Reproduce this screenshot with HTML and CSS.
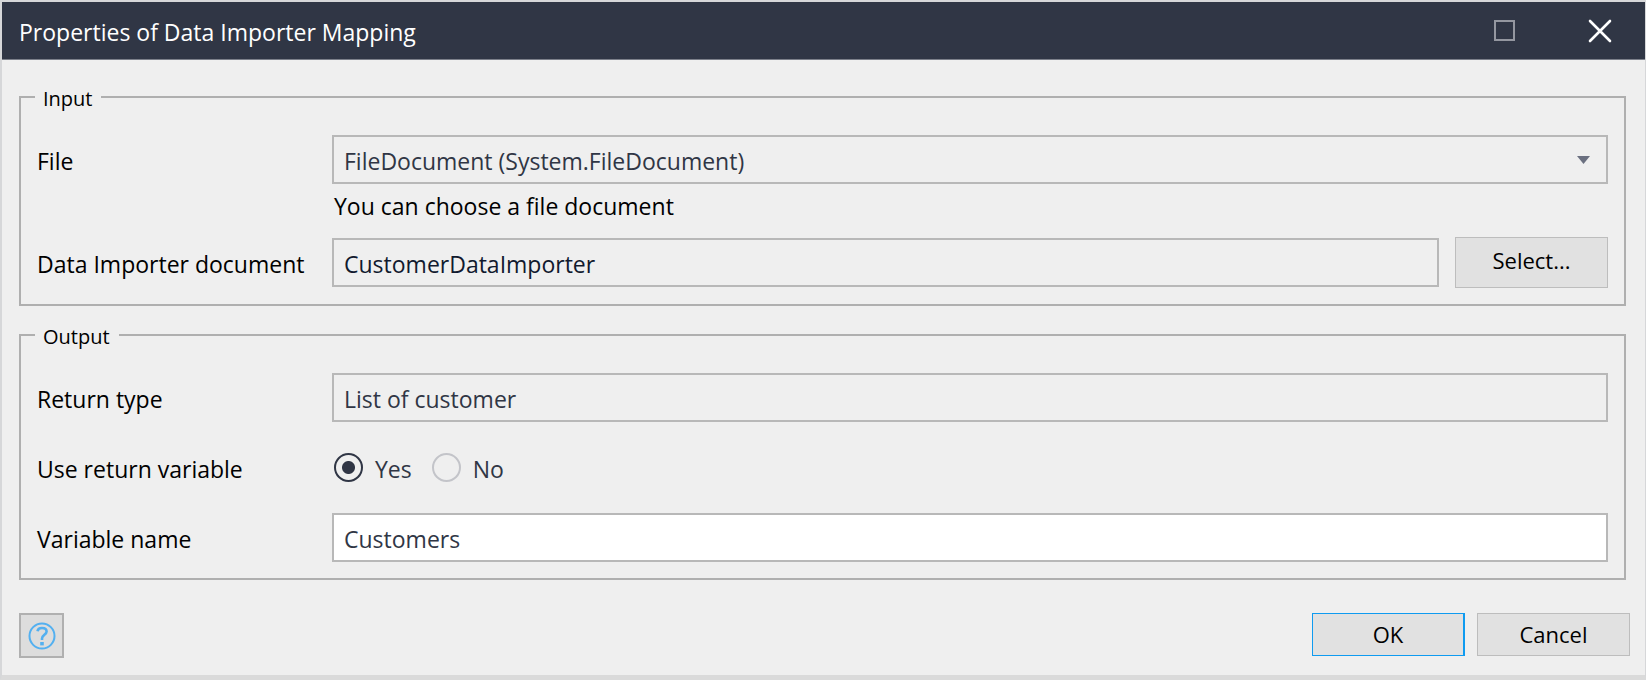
FILE: index.html
```html
<!DOCTYPE html>
<html lang="en">
<head>
<meta charset="utf-8">
<title>Properties of Data Importer Mapping</title>
<link rel="stylesheet" href="styles.css">
</head>
<body>
<main class="dialog">
  <header class="titlebar">
    <h1 class="title">Properties of Data Importer Mapping</h1>
    <div class="window-actions">
      <button class="window-button" type="button" aria-label="Maximize">
        <svg width="22" height="22" viewBox="0 0 22 22"><rect x="1" y="1" width="19" height="19" fill="none" stroke="#9497a0" stroke-width="2"/></svg>
      </button>
      <button class="window-button" type="button" aria-label="Close">
        <svg width="24" height="24" viewBox="0 0 24 24"><path d="M2 2 22 22M22 2 2 22" fill="none" stroke="#fff" stroke-width="2.6" stroke-linecap="round"/></svg>
      </button>
    </div>
  </header>
  <form class="content">
    <fieldset class="group group-input">
      <legend class="legend">Input</legend>
      <div class="row">
        <label class="label" for="file">File</label>
        <div class="select-wrap">
          <select class="field" id="file"><option>FileDocument (System.FileDocument)</option></select>
          <svg class="arrow" width="13" height="8" viewBox="0 0 13 8"><path d="M0 0H13L6.500 8Z" fill="#6b7080"/></svg>
        </div>
      </div>
      <div class="row hint-row">
        <p class="hint">You can choose a file document</p>
      </div>
      <div class="row">
        <label class="label" for="document">Data Importer document</label>
        <div class="picker">
          <input class="field field-dark" id="document" type="text" value="CustomerDataImporter" readonly>
          <button class="button button-tall" type="button">Select...</button>
        </div>
      </div>
    </fieldset>
    <fieldset class="group group-output">
      <legend class="legend">Output</legend>
      <div class="row">
        <label class="label" for="type">Return type</label>
        <input class="field" id="type" type="text" value="List of customer" readonly>
      </div>
      <div class="row">
        <span class="label" id="use-label">Use return variable</span>
        <div class="radios" role="radiogroup" aria-labelledby="use-label">
          <label class="choice"><input class="radio" type="radio" name="use" checked><span class="choice-text">Yes</span></label>
          <label class="choice"><input class="radio" type="radio" name="use"><span class="choice-text">No</span></label>
        </div>
      </div>
      <div class="row">
        <label class="label" for="name">Variable name</label>
        <input class="field field-editable" id="name" type="text" value="Customers">
      </div>
    </fieldset>
    <footer class="footer">
      <button class="help" type="button" aria-label="Help">
        <svg width="28" height="28" viewBox="0 0 28 28" fill="none" stroke="#53b0f0"><circle cx="14" cy="14" r="12.500" stroke-width="2"/><path d="M9.500 9.200C9.800 7 11.500 6 14 6C16.700 6 18.600 7.300 18.600 9.600C18.600 12.600 14 13 14 16.400V18" stroke-width="2.600"/><path d="M14 20V23.400" stroke-width="3.600"/></svg>
      </button>
      <div class="actions">
        <button class="button button-primary" type="submit">OK</button>
        <button class="button" type="button">Cancel</button>
      </div>
    </footer>
  </form>
</main>
</body>
</html>
```

FILE: styles.css
```css
* {
  box-sizing: border-box;
}

body {
  margin: 0;
  background: #efefef;
  color: #000;
  font-family: "Open Sans", "Noto Sans", sans-serif;
  font-size: 23px;
  line-height: 32px;
}

button,
input,
select {
  font: inherit;
}

.dialog {
  min-height: 100vh;
  display: flex;
  flex-direction: column;
  border: solid #d6d7d9;
  border-width: 2px 1px 5px 2px;
  border-bottom-color: #dadada;
}

.titlebar {
  display: flex;
  align-items: center;
  justify-content: space-between;
  height: 58px;
  padding: 0 33px 0 17px;
  background: #303645;
  border-bottom: 1px solid #7c808a;
}

.title {
  margin: 0;
  padding-top: 3px;
  color: #fff;
  font-size: 23px;
  font-weight: 400;
}

.window-actions {
  display: flex;
  align-items: center;
  gap: 72px;
}

.window-button {
  display: flex;
  padding: 0;
  border: 0;
  background: none;
}

.content {
  flex: 1;
  display: flex;
  flex-direction: column;
  gap: 15px;
  padding: 23px 15px 0 17px;
}

.group {
  display: flex;
  flex-direction: column;
  min-width: 0;
  margin: 0 4px 0 0;
  padding: 24px 16px 16px;
  border: 2px solid #afafaf;
}

.group-output {
  gap: 21px;
}

.legend {
  margin-left: -2px;
  padding: 4px 9px 0 8px;
  font-size: 20px;
  line-height: 24px;
}

.row {
  display: grid;
  grid-template-columns: 280px minmax(0, 1fr);
  column-gap: 15px;
  align-items: center;
}

.label {
  padding-top: 3px;
}

.hint-row {
  padding: 6px 0 15px;
}

.hint {
  grid-column: 2;
  margin: 0;
  padding-left: 2px;
}

.field {
  display: block;
  width: 100%;
  min-width: 0;
  height: 49px;
  margin: 0;
  padding: 3px 10px 0;
  border: 2px solid #b8b8b8;
  border-radius: 0;
  background: #efefef;
  color: #303645;
  appearance: none;
}

.field-dark {
  color: #111a2e;
}

.field-editable {
  background: #fff;
}

.select-wrap {
  position: relative;
}

.arrow {
  position: absolute;
  top: 21px;
  right: 18px;
  pointer-events: none;
}

.picker {
  display: flex;
  align-items: center;
  gap: 16px;
}

.button {
  flex: none;
  width: 153px;
  height: 43px;
  padding: 0 0 2px;
  border: 1px solid #bdbdbd;
  background: #e1e1e1;
  color: #000;
  font-size: 22px;
}

.button-tall {
  height: 51px;
  padding-bottom: 5px;
}

.button-primary {
  border-color: #0f9bf0;
  border-right-width: 2px;
}

.radios {
  display: flex;
  align-items: center;
  gap: 20px;
  height: 49px;
  padding-left: 2px;
  color: #303645;
}

.choice {
  display: flex;
  align-items: center;
  gap: 12px;
}

.choice-text {
  padding-top: 3px;
}

.radio {
  width: 29px;
  height: 29px;
  margin: 0;
  border: 2px solid #c3c4c9;
  border-radius: 50%;
  appearance: none;
}

.radio:checked {
  border-color: #303645;
  background: radial-gradient(circle, #303645 6px, transparent 7px);
}

.footer {
  display: flex;
  align-items: flex-start;
  justify-content: space-between;
  padding: 18px 0 16px;
}

.help {
  display: flex;
  align-items: center;
  justify-content: center;
  width: 45px;
  height: 45px;
  padding: 0;
  border: 2px solid #b0b0b0;
  background: #dddddd;
}

.actions {
  display: flex;
  gap: 12px;
}
```
